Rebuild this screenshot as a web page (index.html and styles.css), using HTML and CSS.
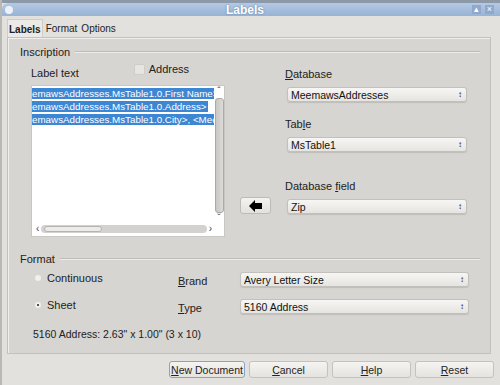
FILE: index.html
```html
<!DOCTYPE html>
<html lang="en">

<head>
  <meta charset="UTF-8">
  <title>Labels</title>
  <link rel="stylesheet" href="styles.css">
</head>

<body>
  <div class="window">
    <div class="top-strip"></div>
    <!-- 标题栏 -->
    <div class="titlebar">
      <span class="title-dot"></span>
      <span class="title">Labels</span>
      <span class="title-btns">
        <span class="tbtn">&#9652;</span>
        <span class="tbtn">&#215;</span>
      </span>
    </div>

    <div class="tabs">
      <span class="tab active">Labels</span>
      <span class="tab">Format</span>
      <span class="tab">Options</span>
    </div>

    <div class="pane">
      <div class="section-head"><span>Inscription</span><span class="rule"></span></div>

      <div class="inscription">
        <div class="left">
          <div class="label-row">
            <span class="lbl">Label text</span>
            <span class="check"><span class="box"></span>Address</span>
          </div>
          <div class="textbox">
            <div class="text-area">
              <div class="line"><span class="sel">emawsAddresses.MsTable1.0.First Name&gt;</span></div>
              <div class="line"><span class="sel">emawsAddresses.MsTable1.0.Address&gt;</span></div>
              <div class="line"><span class="sel">emawsAddresses.MsTable1.0.City&gt;, &lt;MeemawsAddresses.MsTable1.0.State&gt;</span></div>
            </div>
            <div class="vscroll">
              <span class="arr">&#710;</span>
              <span class="vthumb"></span>
              <span class="arr">&#711;</span>
            </div>
            <div class="hscroll">
              <span class="arr">&#8249;</span>
              <span class="htrack"><span class="hthumb"></span></span>
              <span class="arr">&#8250;</span>
            </div>
          </div>
        </div>

        <div class="middle">
          <span class="arrow-btn">
            <svg width="14" height="12" viewBox="0 0 14 12">
              <path d="M0 6 L6 0 L6 3 L13 3 L13 9 L6 9 L6 12 Z" fill="#000" />
            </svg>
          </span>
        </div>

        <div class="right">
          <div class="field-lbl first"><u>D</u>atabase</div>
          <div class="select">MeemawsAddresses<span class="spin">&#8597;</span></div>
          <div class="field-lbl">Tab<u>l</u>e</div>
          <div class="select">MsTable1<span class="spin">&#8597;</span></div>
          <div class="field-lbl far">Database <u>f</u>ield</div>
          <div class="select">Zip<span class="spin">&#8597;</span></div>
        </div>
      </div>

      <div class="section-head format-head"><span>Format</span><span class="rule"></span></div>

      <div class="format">
        <div class="format-row">
          <span class="radio"><span class="dot"></span>Continuous</span>
          <span class="flbl"><u>B</u>rand</span>
          <div class="select wide">Avery Letter Size<span class="spin">&#8597;</span></div>
        </div>
        <div class="format-row">
          <span class="radio"><span class="dot on"></span>Sheet</span>
          <span class="flbl"><u>T</u>ype</span>
          <div class="select wide">5160 Address<span class="spin">&#8597;</span></div>
        </div>
        <div class="summary">5160 Address: 2.63" x 1.00" (3 x 10)</div>
      </div>
    </div>

    <div class="buttons">
      <span class="btn default"><u>N</u>ew Document</span>
      <span class="btn"><u>C</u>ancel</span>
      <span class="btn"><u>H</u>elp</span>
      <span class="btn"><u>R</u>eset</span>
    </div>
  </div>
</body>

</html>
```

FILE: styles.css
```css
body {
  margin: 0;
  background: #dddcd8;
  font-family: "Liberation Sans", Arial, sans-serif;
  font-size: 10.5px;
  color: #222;
}

.window {
  width: 500px;
  height: 385px;
  overflow: hidden;
  border-left: 2px solid #b9b8b4;
  box-sizing: border-box;
  background: #e2e1de;
}

.top-strip {
  height: 3px;
  background: #8d99a8;
}

/* 标题栏 */
.titlebar {
  height: 13px;
  display: flex;
  align-items: center;
  background: linear-gradient(#b4c9e3, #98b3d6);
  border-radius: 6px 0 0 0;
  position: relative;
}

.title-dot {
  width: 8px;
  height: 8px;
  border-radius: 50%;
  background: #eef2f7;
  margin-left: 3px;
}

.title {
  position: absolute;
  left: 224px;
  color: #fff;
  font-size: 12px;
  font-weight: bold;
  text-shadow: 0 0 2px #5a7aa5;
}

.title-btns {
  margin-left: auto;
  display: flex;
  gap: 4px;
  margin-right: 6px;
}

.tbtn {
  width: 9px;
  height: 9px;
  background: #8ea9cc;
  color: #fff;
  font-size: 9px;
  line-height: 9px;
  text-align: center;
}

.tabs {
  display: flex;
  gap: 2px;
  margin-top: 3px;
  margin-left: 5px;
  height: 18px;
}

.tab {
  padding: 0 1px;
  line-height: 20px;
  font-size: 10px;
  color: #222;
}

.tab.active {
  background: #ebeae7;
  border: 1px solid #cfcdc9;
  border-bottom: none;
  font-weight: bold;
  padding: 0 1px;
}

.pane {
  margin-left: 5px;
  width: 484px;
  height: 317px;
  box-sizing: border-box;
  border: 1px solid #c3c1bd;
  background: #d7d5d1;
  padding: 8px 0 0 12px;
  box-shadow: inset 1px 1px 0 #f0efed;
}

.section-head {
  display: flex;
  align-items: center;
  height: 12px;
  font-size: 11px;
}

.section-head .rule {
  flex: 1;
  height: 0;
  border-top: 1px solid #bdbbb7;
  border-bottom: 1px solid #eeede9;
  margin: 0 10px 0 5px;
}

.inscription {
  display: flex;
  padding-left: 11px;
}

.left {
  width: 194px;
}

.label-row {
  display: flex;
  margin-top: 5px;
  height: 16px;
}

.lbl {
  margin-top: 4px;
  font-size: 11px;
}

.check {
  display: flex;
  align-items: center;
  margin-left: 55px;
  margin-top: 1px;
  height: 10px;
  font-size: 11px;
}

.box {
  width: 9px;
  height: 9px;
  background: #e6e5e2;
  border: 1px solid #cfcdc9;
  border-radius: 2px;
  margin-right: 4px;
}

.textbox {
  margin-top: 6px;
  height: 152px;
  background: #fff;
  border: 1px solid #c9c7c3;
  box-sizing: border-box;
  display: grid;
  grid-template-columns: 182px 10px;
  grid-template-rows: 137px 12px;
}

.text-area {
  overflow: hidden;
  padding-top: 1px;
}

.line {
  height: 13px;
  line-height: 13px;
  white-space: nowrap;
  font-size: 9.8px;
}

.sel {
  background: #3c86d3;
  color: #fff;
  padding-right: 1px;
}

.line:first-child .sel,
.line:last-child .sel {
  padding-right: 20px;
}

.vscroll {
  display: flex;
  flex-direction: column;
  align-items: center;
  padding-top: 2px;
}

.arr {
  font-size: 10px;
  line-height: 8px;
  height: 8px;
  color: #444;
}

.vthumb {
  width: 7px;
  flex: 1;
  margin: 2px 0;
  background: linear-gradient(90deg, #c8c7c4, #dcdbd8);
  border: 1px solid #aaa9a6;
  border-radius: 3px;
}

.hscroll {
  display: flex;
  align-items: center;
  padding: 0 2px 0 4px;
}

.htrack {
  flex: 1;
  height: 8px;
  margin: 0 2px;
  background: #d3d2cf;
  border-radius: 4px;
}

.hthumb {
  display: block;
  width: 58px;
  height: 6px;
  margin: 1px 0 0 3px;
  background: #ecebe8;
  border: 1px solid #b4b3b0;
  border-radius: 4px;
  box-sizing: border-box;
}

.middle {
  margin-left: 15px;
  padding-top: 139px;
}

.arrow-btn {
  display: flex;
  align-items: center;
  justify-content: center;
  width: 31px;
  height: 17px;
  box-sizing: border-box;
  background: linear-gradient(#f4f3f1, #e3e1dd);
  border: 1px solid #bdbbb7;
  border-radius: 3px;
}

.right {
  margin-left: 14px;
}

.field-lbl {
  height: 12px;
  line-height: 12px;
  margin-top: 16px;
  font-size: 11px;
}

.field-lbl.first {
  margin-top: 10px;
}

.field-lbl.far {
  margin-top: 28px;
}

.select {
  display: flex;
  align-items: center;
  width: 180px;
  height: 15px;
  margin: 7px 0 0 2px;
  box-sizing: border-box;
  padding-left: 3px;
  background: linear-gradient(#f7f6f4, #e6e4e0);
  border: 1px solid #c2c0bc;
  border-radius: 3px;
  box-shadow: 0 1px 1px #bfbdb9;
  font-size: 10.5px;
  color: #111;
}

.select.wide {
  width: 229px;
  margin: 0;
}

.spin {
  margin-left: auto;
  margin-right: 4px;
  font-size: 8px;
}

.format-head {
  margin-top: 16px;
}

.format {
  padding-left: 13px;
}

.format-row {
  display: flex;
  align-items: center;
  height: 15px;
  margin-top: 7px;
}

.format-row + .format-row {
  margin-top: 12px;
}

.radio {
  display: flex;
  align-items: center;
  width: 145px;
  margin-top: -4px;
  font-size: 11px;
}

.dot {
  width: 6px;
  height: 6px;
  border-radius: 50%;
  background: #f1f0ee;
  margin: 0 6px 0 2px;
  position: relative;
}

.dot.on::after {
  content: '';
  position: absolute;
  left: 2px;
  top: 2px;
  width: 2px;
  height: 2px;
  border-radius: 50%;
  background: #222;
}

.flbl {
  width: 62px;
  margin-top: 2px;
  font-size: 11px;
}

.summary {
  margin-top: 14px;
  font-size: 10.5px;
}

.buttons {
  display: flex;
  gap: 4px;
  margin: 7px 0 0 167px;
}

.btn {
  width: 79px;
  height: 17px;
  line-height: 16px;
  text-align: center;
  box-sizing: border-box;
  background: linear-gradient(#f5f4f2, #e5e3df);
  border: 1px solid #c4c2be;
  border-radius: 3px;
  font-size: 10.5px;
  color: #222;
}

.btn.default {
  width: 76px;
  border-color: #8aa3c2;
}
```
